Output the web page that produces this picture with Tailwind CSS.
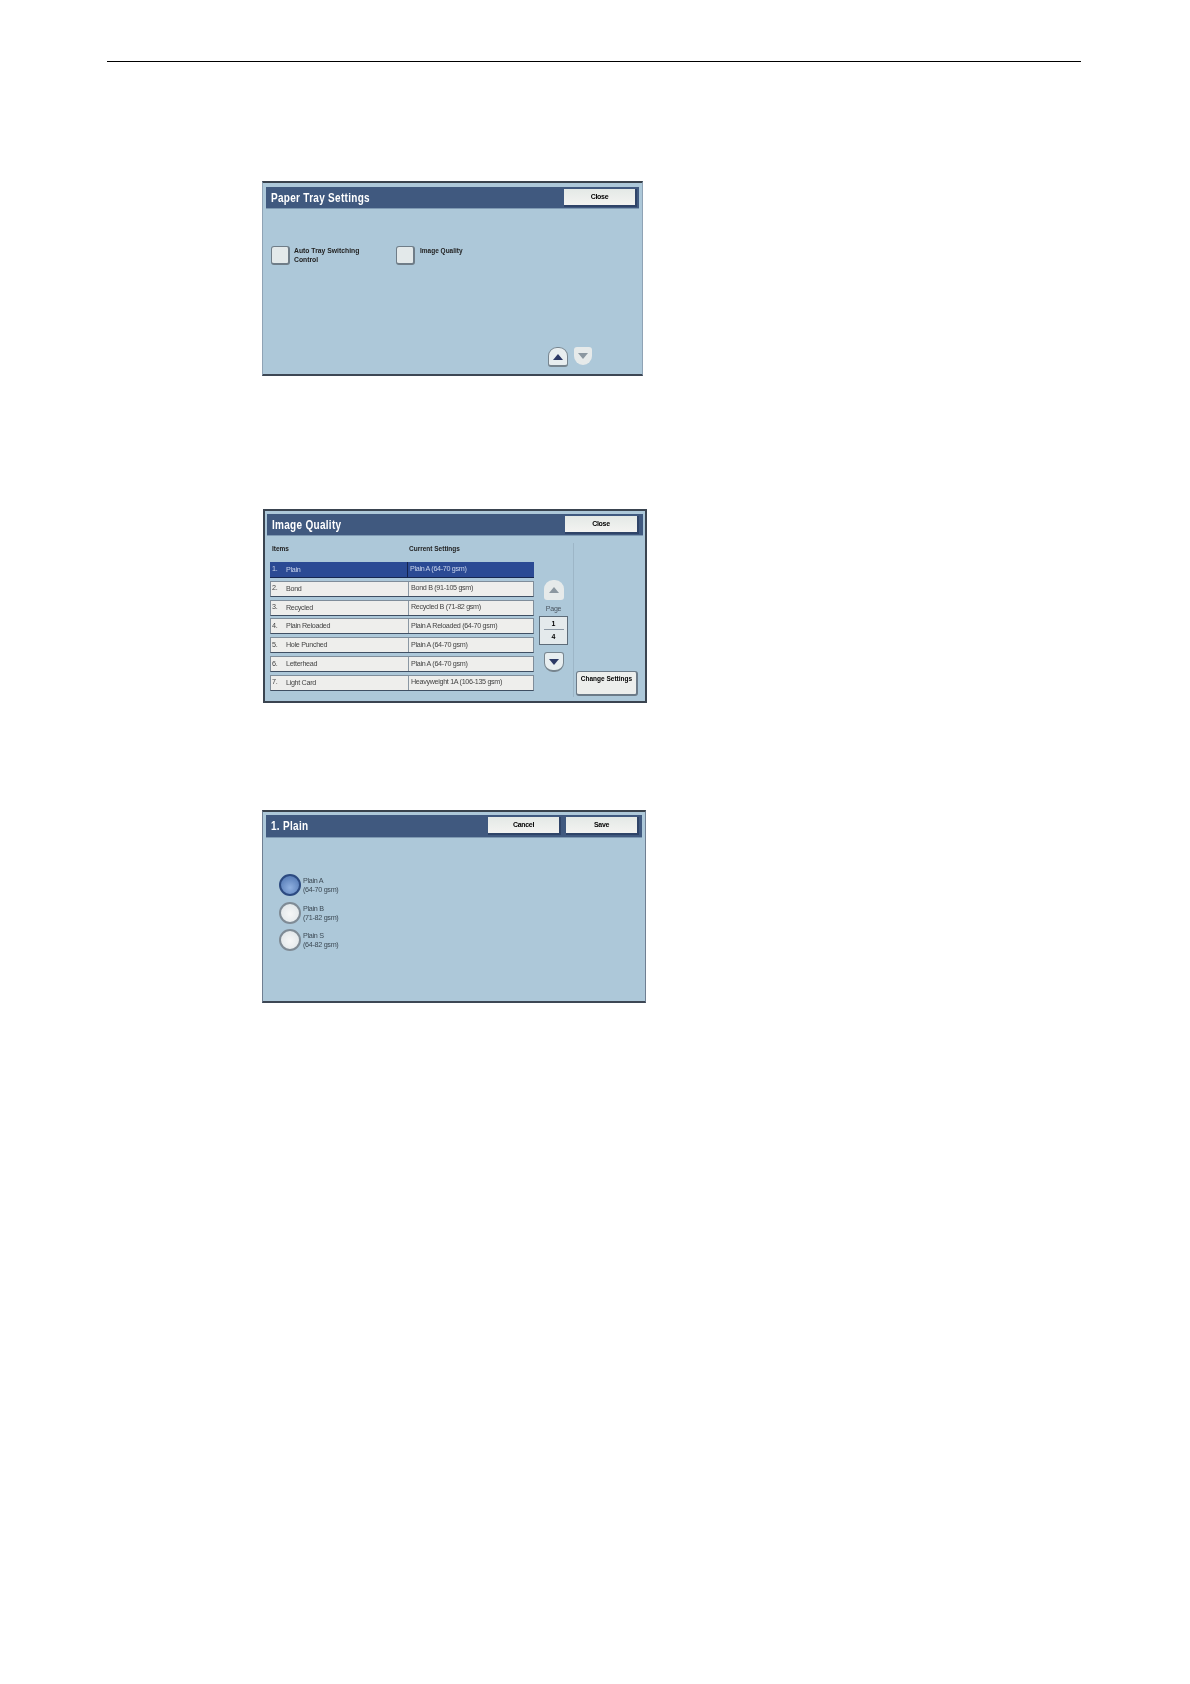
<!doctype html>
<html lang="en">

<head>
  <meta charset="UTF-8" />
  <title>Paper Tray Settings</title>
  <script src="https://cdn.jsdelivr.net/npm/@tailwindcss/browser@4"></script>
</head>

<body class="bg-white w-[1190px] h-[1684px] overflow-hidden font-['Liberation_Sans',sans-serif] text-[#222]">
  <div class="ml-[107px] mt-[61px] w-[974px] h-[1px] bg-black"></div>

  <!-- Paper Tray Settings -->
  <section class="ml-[262px] mt-[119px] w-[381px] h-[195px] flex flex-col bg-[#adc8d9] border-t-2 border-b-2 border-x border-t-[#39424c] border-b-[#3d4754] border-x-[#8fa3b5] pt-1 px-[3px] blur-[0.3px]">
    <header class="h-[22px] flex items-center justify-between bg-[#40597f] border-b border-[#7f9ab3] pl-[5px] pr-[2px]">
      <h1 class="text-white font-bold text-[13.5px] tracking-[0.4px] whitespace-nowrap origin-left scale-x-[0.74] mt-[1px]">Paper Tray Settings</h1>
      <button class="w-[73px] h-[18px] mt-[1px] bg-linear-to-b from-[#e4e9e6] to-[#f3f3f1] border-r-2 border-b-2 border-[#2f4468] text-[7px] tracking-[-0.3px] font-bold text-black">Close</button>
    </header>
    <div class="flex mt-[37px] pl-[5px]">
      <div class="flex w-[125px] gap-1">
        <span class="w-[19px] h-[19px] rounded-[3px] bg-[#e3e9ea] border border-[#6f7d88] border-b-2 border-r-2"></span>
        <p class="text-[6.8px] leading-[8.5px] font-bold mt-[1px]">Auto Tray Switching<br>Control</p>
      </div>
      <div class="flex gap-[5px]">
        <span class="w-[19px] h-[19px] rounded-[3px] bg-[#e3e9ea] border border-[#6f7d88] border-b-2 border-r-2"></span>
        <p class="text-[6.5px] leading-[8.5px] font-bold mt-[1px]">Image Quality</p>
      </div>
    </div>
    <div class="mt-auto mb-[7px] ml-[282px] flex gap-[6px]">
      <button class="w-5 h-5 flex items-center justify-center rounded-t-[9px] rounded-b-[3px] bg-[#e8eef0] border border-[#77858f] border-b-2">
        <svg width="10" height="6" viewBox="0 0 10 6"><polygon points="5,0 10,6 0,6" fill="#2c3a66" /></svg>
      </button>
      <button class="w-[18px] h-[18px] flex items-center justify-center rounded-b-[9px] rounded-t-[3px] bg-[#e6eaea]">
        <svg width="10" height="6" viewBox="0 0 10 6"><polygon points="0,0 10,0 5,6" fill="#8b97a0" /></svg>
      </button>
    </div>
  </section>

  <!-- Image Quality -->
  <section class="ml-[263px] mt-[133px] w-[384px] h-[194px] flex flex-col bg-[#adc8d9] border-2 border-[#3a4450] pt-[3px] px-[2px] blur-[0.3px]">
    <header class="h-[22px] shrink-0 flex items-center justify-between bg-[#40597f] border-b border-[#7f9ab3] pl-[5px] pr-[4px]">
      <h1 class="text-white font-bold text-[13.5px] tracking-[0.4px] whitespace-nowrap origin-left scale-x-[0.74] mt-[1px]">Image Quality</h1>
      <button class="w-[74px] h-[18px] mt-[1px] bg-linear-to-b from-[#e4e9e6] to-[#f3f3f1] border-r-2 border-b-2 border-[#2f4468] text-[7px] tracking-[-0.3px] font-bold text-black">Close</button>
    </header>
    <div class="flex flex-1 pl-[3px]">
      <div class="w-[264px]">
        <div class="flex h-[26px] items-center text-[6.5px] font-bold">
          <span class="w-[139px] pl-[2px]">Items</span>
          <span>Current Settings</span>
        </div>
        <div class="flex flex-col gap-[2.8px] text-[7.2px] tracking-[-0.33px] text-[#444]">
          <div class="h-4 flex items-center bg-[#2b4a94] border-b border-[#16264f] text-[#c9d4ec]">
            <span class="w-[15px] pl-[2px]">1.</span><span class="w-[123px] h-full leading-[15px] pl-[1px] border-r border-[#14234d]">Plain</span><span class="pl-[2px]">Plain A (64-70 gsm)</span>
          </div>
          <div class="h-4 flex items-center bg-[#eeeeec] border border-[#7f8d9a] border-b-[#3f4f63]">
            <span class="w-[15px] pl-[1px]">2.</span><span class="w-[123px] h-full leading-[14px] border-r border-[#8a97a3]">Bond</span><span class="pl-[2px]">Bond B (91-105 gsm)</span>
          </div>
          <div class="h-4 flex items-center bg-[#eeeeec] border border-[#7f8d9a] border-b-[#3f4f63]">
            <span class="w-[15px] pl-[1px]">3.</span><span class="w-[123px] h-full leading-[14px] border-r border-[#8a97a3]">Recycled</span><span class="pl-[2px]">Recycled B (71-82 gsm)</span>
          </div>
          <div class="h-4 flex items-center bg-[#eeeeec] border border-[#7f8d9a] border-b-[#3f4f63]">
            <span class="w-[15px] pl-[1px]">4.</span><span class="w-[123px] h-full leading-[14px] border-r border-[#8a97a3]">Plain Reloaded</span><span class="pl-[2px]">Plain A Reloaded (64-70 gsm)</span>
          </div>
          <div class="h-4 flex items-center bg-[#eeeeec] border border-[#7f8d9a] border-b-[#3f4f63]">
            <span class="w-[15px] pl-[1px]">5.</span><span class="w-[123px] h-full leading-[14px] border-r border-[#8a97a3]">Hole Punched</span><span class="pl-[2px]">Plain A (64-70 gsm)</span>
          </div>
          <div class="h-4 flex items-center bg-[#eeeeec] border border-[#7f8d9a] border-b-[#3f4f63]">
            <span class="w-[15px] pl-[1px]">6.</span><span class="w-[123px] h-full leading-[14px] border-r border-[#8a97a3]">Letterhead</span><span class="pl-[2px]">Plain A (64-70 gsm)</span>
          </div>
          <div class="h-4 flex items-center bg-[#eeeeec] border border-[#7f8d9a] border-b-[#3f4f63]">
            <span class="w-[15px] pl-[1px]">7.</span><span class="w-[123px] h-full leading-[14px] border-r border-[#8a97a3]">Light Card</span><span class="pl-[2px]">Heavyweight 1A (106-135 gsm)</span>
          </div>
        </div>
      </div>
      <div class="w-[34px] ml-[4px] flex flex-col items-center pt-[44px] pr-[3px]">
        <button class="w-5 h-5 flex items-center justify-center rounded-t-[9px] rounded-b-[3px] bg-[#e6eaea]">
          <svg width="10" height="6" viewBox="0 0 10 6"><polygon points="5,0 10,6 0,6" fill="#8b97a0" /></svg>
        </button>
        <span class="mt-[4px] text-[7px] tracking-[-0.2px] leading-[10px] text-[#4a5560]">Page</span>
        <div class="mt-[2px] w-[29px] h-[29px] flex flex-col items-center bg-[#e4eaec] border border-[#5d6c79] text-[7px] font-bold text-black">
          <span class="h-[13px] w-5 leading-[13px] text-center border-b border-[#8a97a3]">1</span>
          <span class="leading-[13px]">4</span>
        </div>
        <button class="mt-[7px] w-5 h-5 flex items-center justify-center rounded-b-[9px] rounded-t-[3px] bg-[#e8eef0] border border-[#77858f] border-b-2">
          <svg width="10" height="6" viewBox="0 0 10 6"><polygon points="0,0 10,0 5,6" fill="#2c3a66" /></svg>
        </button>
      </div>
      <div class="flex-1 ml-[1px] mt-[7px] mb-[4px] border-l border-[#9db6c7] flex items-end pl-[2px] pb-[1px]">
        <button class="w-[62px] h-[25px] pt-[2px] flex justify-center bg-[#eceeec] rounded-[3px] border border-[#6c7b88] border-b-2 border-r-2 text-[6.5px] whitespace-nowrap font-bold text-black">Change Settings</button>
      </div>
    </div>
  </section>

  <!-- 1. Plain -->
  <section class="ml-[262px] mt-[107px] w-[384px] h-[193px] flex flex-col bg-[#adc8d9] border-t-2 border-b-2 border-x border-t-[#39424c] border-b-[#3d4754] border-x-[#6f7f92] pt-[3px] px-[3px] blur-[0.3px]">
    <header class="h-[23px] shrink-0 flex items-center bg-[#40597f] border-b border-[#7f9ab3] pl-[5px] pr-[3px]">
      <h1 class="text-white font-bold text-[13.5px] tracking-[0.4px] mr-auto whitespace-nowrap origin-left scale-x-[0.74] mt-[1px]">1. Plain</h1>
      <button class="w-[73px] h-[18px] bg-linear-to-b from-[#e4e9e6] to-[#f3f3f1] border-r-2 border-b-2 border-[#2f4468] text-[7px] tracking-[-0.3px] font-bold text-black">Cancel</button>
      <button class="ml-[5px] w-[73px] h-[18px] bg-linear-to-b from-[#e4e9e6] to-[#f3f3f1] border-r-2 border-b-2 border-[#2f4468] text-[7px] tracking-[-0.3px] font-bold text-black">Save</button>
    </header>
    <div class="mt-[36px] pl-[13px] flex flex-col gap-[5.5px] text-[7.2px] tracking-[-0.3px] leading-[9px] text-[#3d4a55]">
      <div class="flex items-center gap-[2px]">
        <span class="w-[22px] h-[22px] rounded-full border-2 border-[#2c4a80] bg-[radial-gradient(circle_at_50%_65%,#8fb0e0,#4a70ad)]"></span>
        <p>Plain A<br>(64-70 gsm)</p>
      </div>
      <div class="flex items-center gap-[2px]">
        <span class="w-[22px] h-[22px] rounded-full border-2 border-[#7f8b95] bg-[radial-gradient(circle_at_50%_55%,#f6f7f7,#dde3e6)]"></span>
        <p>Plain B<br>(71-82 gsm)</p>
      </div>
      <div class="flex items-center gap-[2px]">
        <span class="w-[22px] h-[22px] rounded-full border-2 border-[#7f8b95] bg-[radial-gradient(circle_at_50%_55%,#f6f7f7,#dde3e6)]"></span>
        <p>Plain S<br>(64-82 gsm)</p>
      </div>
    </div>
  </section>
</body>

</html>
